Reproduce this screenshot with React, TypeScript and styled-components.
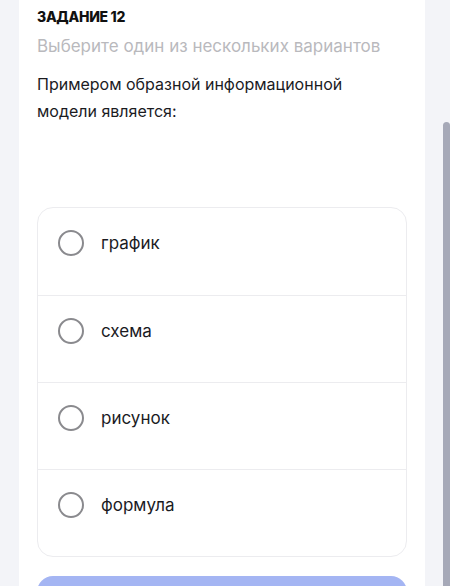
import React, { FC, useState } from 'react';
import styled, { createGlobalStyle } from 'styled-components';

const GlobalStyle = createGlobalStyle`
  html, body {
    margin: 0;
    padding: 0;
    background: #f3f4f8;
    font-family: Inter, 'Noto Sans', sans-serif;
    overflow: hidden;
  }
`;

const Page = styled.div`
  display: flex;
  height: 586px;
  background: #f3f4f8;
  overflow: hidden;
`;

const Main = styled.div`
  flex: 1;
  padding: 0 17px 0 19px;
`;

const Card = styled.div`
  background: #fff;
  height: 100%;
  padding: 7px 18px 0;
  box-sizing: border-box;
`;

const Label = styled.div`
  font-size: 14px;
  font-weight: 800;
  color: #111;
  letter-spacing: -0.3px;
  line-height: 20px;
`;

const Hint = styled.div`
  margin-top: 7px;
  font-size: 17px;
  color: #b9b9bd;
  line-height: 24px;
`;

const Question = styled.p`
  margin: 13px 0 0;
  font-size: 16px;
  line-height: 27px;
  color: #1b1b1f;
`;

const Options = styled.div`
  margin-top: 82px;
  border: 1px solid #ececef;
  border-radius: 16px;
  overflow: hidden;
`;

const Option = styled.label`
  display: flex;
  align-items: flex-start;
  gap: 17px;
  height: 87px;
  padding: 22px 20px 0;
  box-sizing: border-box;
  cursor: pointer;

  & + & {
    border-top: 1px solid #ececef;
  }
`;

const Radio = styled.span<{ checked: boolean }>`
  width: 26px;
  height: 26px;
  border-radius: 50%;
  border: 2.5px solid ${({ checked }) => (checked ? '#6b82ef' : '#8a8a8e')};
  box-sizing: border-box;
  flex-shrink: 0;
`;

const OptionText = styled.span`
  font-size: 17px;
  line-height: 26px;
  color: #1b1b1f;
`;

const Submit = styled.button`
  display: block;
  width: 100%;
  margin-top: 19px;
  height: 52px;
  border: none;
  border-radius: 16px;
  background: #a4b5f3;
`;

const Track = styled.div`
  width: 8px;
  padding-top: 122px;
  background: #f3f4f8;
`;

const Thumb = styled.div`
  height: 100%;
  margin-left: 1px;
  background: #a6a9b8;
  border-radius: 4px 4px 0 0;
`;

const options = ['график', 'схема', 'рисунок', 'формула'];

const App: FC = () => {
  const [selected, setSelected] = useState<number | null>(null);

  return (
    <>
      <GlobalStyle />
      <Page>
        <Main>
          <Card>
            <Label>ЗАДАНИЕ 12</Label>
            <Hint>Выберите один из нескольких вариантов</Hint>
            <Question>
              Примером образной информационной
              <br />
              модели является:
            </Question>
            <Options>
              {options.map((text, i) => (
                <Option key={text} onClick={() => setSelected(i)}>
                  <Radio checked={selected === i} />
                  <OptionText>{text}</OptionText>
                </Option>
              ))}
            </Options>
            <Submit aria-label="Ответить" />
          </Card>
        </Main>
        <Track>
          <Thumb />
        </Track>
      </Page>
    </>
  );
};

export default App;
